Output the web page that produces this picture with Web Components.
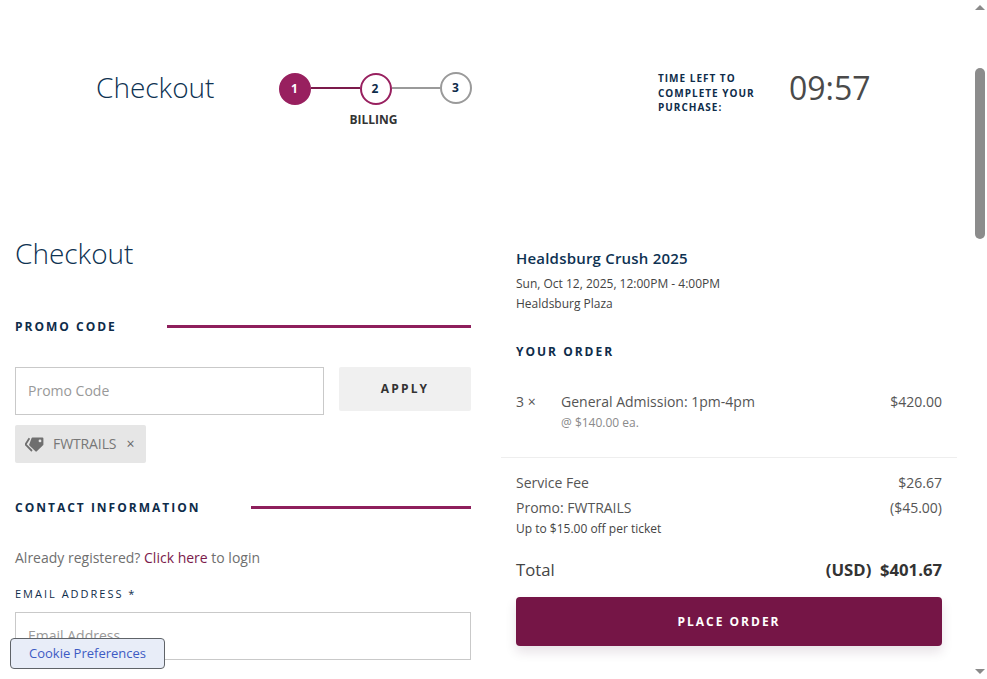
<!DOCTYPE html>
<html lang="en"><head><meta charset="utf-8"><title>Checkout</title>
<style>
html,body{margin:0;height:100%;overflow:hidden;background:#fff}
body{font-family:"Open Sans","Liberation Sans",sans-serif;color:#333}
</style></head><body>
<checkout-app></checkout-app>
<script>
function def(name, html){
  customElements.define(name, class extends HTMLElement{
    constructor(){super();this.attachShadow({mode:'open'}).innerHTML=html;}
  });
}
def('page-scrollbar',`<style>
:host{display:flex;flex-direction:column;align-items:center;width:15px;height:679px;background:#fff;flex:none;box-sizing:border-box}
.a{width:0;height:0;border-left:5px solid transparent;border-right:5px solid transparent;margin-top:5px;border-bottom:5px solid #8a8a8a}
.t{width:10px;height:171px;margin-top:58px;background:#8c8c8c;border-radius:5px}
.s{flex:1}
.b{width:0;height:0;border-left:5px solid transparent;border-right:5px solid transparent;margin-bottom:5px;border-top:5px solid #8a8a8a}
</style><div class="a"></div><div class="t"></div><div class="s"></div><div class="b"></div>`);

def('step-dot',`<style>
:host{display:flex;align-items:center;justify-content:center;box-sizing:border-box;width:32px;height:32px;padding-right:1px;border-radius:50%;border:2px solid #98205f;background:#fff;font:700 12px/1 "Open Sans",sans-serif;color:#0e2c4a;flex:none}
:host([state=done]){background:#98205f;color:#fff}
:host([state=todo]){border-color:#9a9a9a}
</style><slot></slot>`);

def('check-stepper',`<style>
:host{display:block;width:193px;flex:none;margin-top:72px}
.r{display:flex;align-items:flex-start}
.l{height:2px;width:49px;background:#7b1a4b;margin-top:15px}
.l.g{background:#9a9a9a}
.d{margin-top:1px}
.c{font:700 12px/16px "Open Sans",sans-serif;color:#333;text-align:center;margin:7px 0 0 0;width:189px}
</style>
<div class="r"><step-dot state="done" class="d">1</step-dot><div class="l"></div><step-dot class="d">2</step-dot><div class="l g"></div><step-dot state="todo">3</step-dot></div>
<div class="c">BILLING</div>`);

def('count-down',`<style>
:host{display:flex;align-items:flex-start;flex:none;margin-top:71px}
.m{font:700 10px/14.5px "Open Sans",sans-serif;letter-spacing:1px;color:#0e2c4a;width:131px}
.v{font:400 32px/36px "Open Sans",sans-serif;color:#4a4a4a;margin-top:-1px}
</style><div class="m">TIME LEFT TO<br>COMPLETE YOUR<br>PURCHASE:</div><div class="v">09:57</div>`);

def('check-header',`<style>
:host{display:flex;align-items:flex-start;height:176px;padding-left:96px;box-sizing:border-box}
h1{margin:70px 0 0;width:183px;flex:none;font:300 28px/34px "Open Sans",sans-serif;color:#0e3252}
check-stepper{margin-right:186px}
</style><h1>Checkout</h1><check-stepper></check-stepper><count-down></count-down>`);

def('section-head',`<style>
:host{display:flex;align-items:center;gap:50px;height:20px}
.t{font:700 12px/20px "Open Sans",sans-serif;letter-spacing:2px;color:#0e2c4a;white-space:nowrap;margin-top:2px}
.l{flex:1;height:3px;background:#8e1f5c}
</style><div class="t"><slot></slot></div><div class="l"></div>`);

def('field-box',`<style>
:host{display:flex;align-items:center;box-sizing:border-box;height:48px;border:1px solid #c9c9c9;padding-left:12px;font:400 14px/20px "Open Sans",sans-serif;color:#999;background:#fff}
</style><slot></slot>`);

def('promo-tag',`<style>
:host{display:inline-flex;align-items:center;box-sizing:border-box;height:38px;width:131px;padding:0 0 0 10px;background:#e6e6e6;border-radius:2px;font:400 14px/20px "Open Sans",sans-serif;letter-spacing:-.1px;color:#777}
svg{width:19px;height:15px;margin-right:9px;flex:none}
.x{margin-left:10px;font-size:14px;color:#666}
</style><svg viewBox="0 0 19 15"><path fill="#6f6f6f" d="M7.6.6H17.4a1 1 0 0 1 1 1v5.8a1.2 1.2 0 0 1-.4.9L11.8 14.3a1 1 0 0 1-1.4 0L4.4 8.4a1 1 0 0 1 0-1.4L6.6 1.1A1 1 0 0 1 7.6.6z"/><path fill="none" stroke="#6f6f6f" stroke-width="1.8" d="M4.4 1.2.9 6.8a1 1 0 0 0 .1 1.2L7 14"/><circle cx="15" cy="3.9" r="1.4" fill="#e6e6e6"/></svg><span>FWTRAILS</span><span class="x">×</span>`);

def('left-column',`<style>
:host{display:block;width:456px;flex:none;margin-left:15px}
h2{margin:0;font:300 28px/36px "Open Sans",sans-serif;color:#0e3252;padding-top:59px}
section-head{margin-top:45px}
.promo{display:flex;gap:15px;margin-top:31px}
field-box{flex:1}
.apply{width:132px;height:44px;background:#f0f0f0;border-radius:2px;font:700 12px/44px "Open Sans",sans-serif;letter-spacing:2.2px;color:#333;text-align:center;flex:none}
promo-tag{margin-top:10px;vertical-align:top}
section-head.contact{margin-top:34px}
p{margin:31px 0 0;font:400 14px/20px "Open Sans",sans-serif;color:#6f6f6f}
a{color:#7b1a4b;text-decoration:none}
label{display:block;margin-top:18px;font:400 11px/16px "Open Sans",sans-serif;letter-spacing:2px;color:#0e2c4a}
.mail{margin-top:10px}
</style>
<h2>Checkout</h2>
<section-head>PROMO CODE</section-head>
<div class="promo"><field-box>Promo Code</field-box><div class="apply">APPLY</div></div>
<promo-tag></promo-tag>
<section-head class="contact">CONTACT INFORMATION</section-head>
<p>Already registered? <a>Click here</a> to login</p>
<label>EMAIL ADDRESS *</label>
<field-box class="mail">Email Address</field-box>`);

def('price-row',`<style>
:host{display:flex;justify-content:space-between;font:400 14px/20px "Open Sans",sans-serif;color:#555}
</style><span><slot name="k"></slot></span><span><slot name="v"></slot></span>`);

def('order-summary',`<style>
:host{display:block;width:456px;flex:none;margin-left:30px;box-sizing:border-box;padding-top:70px}
.in{padding:0 15px}
h3{margin:0;font:600 15px/24px "Open Sans",sans-serif;letter-spacing:.2px;color:#0e3252}
.d{font:400 12px/20px "Open Sans",sans-serif;color:#444}
.d.a{margin-top:4px}
h4{margin:28px 0 0;font:700 12px/20px "Open Sans",sans-serif;letter-spacing:2px;color:#0e2c4a}
.item{display:flex;margin-top:30px;font:400 14px/20px "Open Sans",sans-serif;color:#555;height:65px}
.q{width:45px;flex:none}
.n{flex:1}
.ea{font-size:12px;line-height:18px;color:#8a8a8a;margin-top:2px}
hr{border:0;border-top:1px solid #eee;margin:0}
.fee{margin-top:15px}
.promo{margin-top:5px}
.sm{font:400 12px/16px "Open Sans",sans-serif;color:#444;margin-top:3px}
.tot{display:flex;justify-content:space-between;align-items:center;margin-top:19px;height:28px;font:400 16.7px/28px "Open Sans",sans-serif;color:#444}
.tot b{font-weight:700;color:#333;white-space:pre}
.btn{margin-top:13px;height:49px;background:#751546;border-radius:4px;color:#fff;text-align:center;font:700 12px/49px "Open Sans",sans-serif;letter-spacing:2px;box-shadow:0 6px 12px rgba(60,20,50,.12)}
</style>
<div class="in"><h3>Healdsburg Crush 2025</h3>
<div class="d a">Sun, Oct 12, 2025, 12:00PM - 4:00PM</div>
<div class="d">Healdsburg Plaza</div>
<h4>YOUR ORDER</h4>
<div class="item"><div class="q">3 ×</div><div class="n">General Admission: 1pm-4pm<div class="ea">@ $140.00 ea.</div></div><div>$420.00</div></div></div>
<hr>
<div class="in">
<price-row class="fee"><span slot="k">Service Fee</span><span slot="v">$26.67</span></price-row>
<price-row class="promo"><span slot="k">Promo: FWTRAILS</span><span slot="v">($45.00)</span></price-row>
<div class="sm">Up to $15.00 off per ticket</div>
<div class="tot"><span>Total</span><b>(USD)  $401.67</b></div>
<div class="btn">PLACE ORDER</div></div>`);

def('cookie-button',`<style>
:host{position:absolute;left:10px;top:638px;box-sizing:border-box;width:155px;height:31px;border:1px solid #5f6368;border-radius:4px;background:#e8edf8;color:#3d5bc4;font:400 13px/29px "Open Sans",sans-serif;text-align:center}
</style>Cookie Preferences`);

def('checkout-app',`<style>
:host{display:flex;width:987px;height:679px;overflow:hidden;position:relative}
.main{flex:1;min-width:0;overflow:hidden}
.cols{display:flex;align-items:flex-start}
</style>
<div class="main"><check-header></check-header>
<div class="cols"><left-column></left-column><order-summary></order-summary></div></div>
<page-scrollbar></page-scrollbar><cookie-button></cookie-button>`);
</script>
</body></html>
